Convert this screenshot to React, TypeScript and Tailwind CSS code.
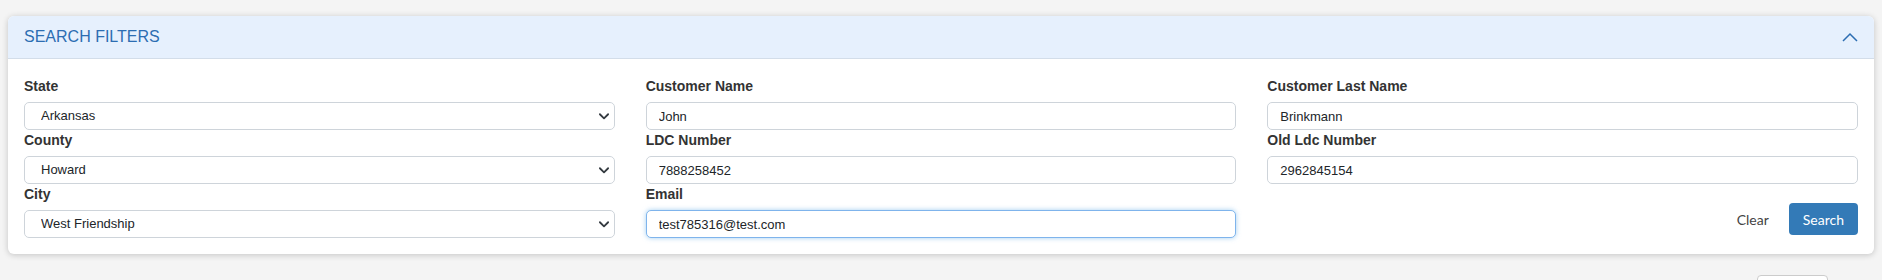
import { useState } from 'react';

type Field = {
    label: string;
    value: string;
    kind: 'select' | 'input';
    focused?: boolean;
};

const fields: Field[] = [
    { label: 'State', value: 'Arkansas', kind: 'select' },
    { label: 'Customer Name', value: 'John', kind: 'input' },
    { label: 'Customer Last Name', value: 'Brinkmann', kind: 'input' },
    { label: 'County', value: 'Howard', kind: 'select' },
    { label: 'LDC Number', value: '7888258452', kind: 'input' },
    { label: 'Old Ldc Number', value: '2962845154', kind: 'input' },
    { label: 'City', value: 'West Friendship', kind: 'select' },
    { label: 'Email', value: 'test785316@test.com', kind: 'input', focused: true },
];

function FilterField({ field }: { field: Field }) {
    const [value, setValue] = useState(field.value);

    return (
        <div className="flex flex-col">
            <label className="text-[14px] leading-[21px] font-bold text-[#333] mb-[5px]">{field.label}</label>
            {field.kind === 'select' ? (
                <div className="relative">
                    <select
                        value={value}
                        onChange={(e) => setValue(e.target.value)}
                        className="appearance-none w-full h-[28px] border border-[#ced4da] rounded-[5px] bg-white pl-4 pr-8 text-[13px] text-[#212529] outline-none"
                    >
                        <option>{field.value}</option>
                    </select>
                    <svg className="absolute right-[5px] top-[10px] pointer-events-none" width="12" height="9" viewBox="0 0 16 12" fill="none">
                        <path d="M2.5 3l5.5 5.5 5.5-5.5" stroke="#343a40" strokeWidth="2.4" strokeLinecap="round" strokeLinejoin="round" />
                    </svg>
                </div>
            ) : (
                <input
                    value={value}
                    onChange={(e) => setValue(e.target.value)}
                    className={
                        field.focused
                            ? "w-full h-[28px] border border-[#7fb4ec] rounded-[5px] bg-white px-3 text-[13px] text-[#212529] outline-none shadow-[0_0_5px_rgba(102,175,233,0.6)]"
                            : "w-full h-[28px] border border-[#ced4da] rounded-[5px] bg-white px-3 text-[13px] text-[#212529] outline-none"
                    }
                />
            )}
        </div>
    );
}

export default function App() {
    const [open, setOpen] = useState(true);

    return (
        <div className="h-[280px] bg-[#f4f4f4] pt-4 px-2 overflow-hidden" style={{ fontFamily: '"Liberation Sans", Arial, sans-serif' }}>
            <div className="bg-white rounded-[6px] shadow-[0_1px_6px_rgba(0,0,0,0.2)] overflow-hidden">
                <div className="h-[43px] bg-[#e6f0fd] border-b border-[#d3dde9] flex items-center justify-between pl-4 pr-4">
                    <span className="text-[16px] text-[#2c6db2]">SEARCH FILTERS</span>
                    <button onClick={() => setOpen(!open)} className="w-4 h-[10px] flex items-center">
                        <svg width="16" height="10" viewBox="0 0 16 10" fill="none">
                            <path d="M1 9L8 2l7 7" stroke="#2c6db2" strokeWidth="1.5" />
                        </svg>
                    </button>
                </div>
                {open && (
                    <div className="grid grid-cols-3 gap-x-[31px] pt-[17px] px-4 pb-4">
                        {fields.map((f) => (
                            <FilterField key={f.label} field={f} />
                        ))}
                        <div className="flex justify-end items-end pb-[3px]">
                            <button className="h-[32px] px-3 mr-[8px] text-[14px] text-[#444]" style={{ fontFamily: 'Lato, sans-serif' }}>Clear</button>
                            <button className="h-[32px] px-[14px] rounded-[4px] bg-[#337ab7] text-white text-[14px]" style={{ fontFamily: 'Lato, sans-serif' }}>Search</button>
                        </div>
                    </div>
                )}
            </div>
            <div className="flex justify-end pr-[46px] mt-[21px]">
                <div className="w-[71px] h-[30px] bg-white border border-[#ccc] rounded-[4px]"></div>
            </div>
        </div>
    );
}
